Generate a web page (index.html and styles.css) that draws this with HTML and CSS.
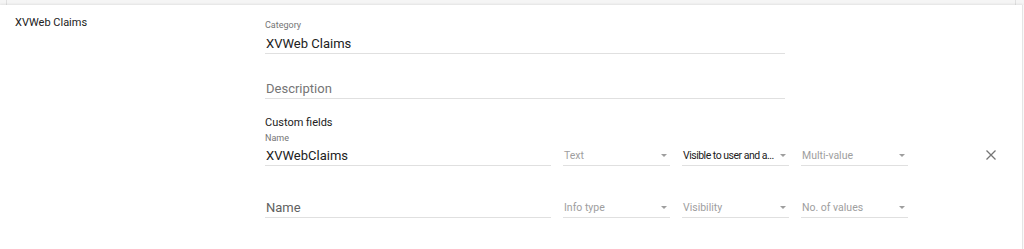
FILE: index.html
```html
<!DOCTYPE html>
<html lang="en">
<head>
<meta charset="utf-8">
<title>XVWeb Claims</title>
<link rel="stylesheet" href="styles.css">
</head>
<body>
<div class="page">
  <div class="prev"><div class="prev-inner"></div></div>
  <div class="card">
    <div class="card-title">XVWeb Claims</div>
    <div class="form">
      <div class="field wide">
        <div class="label">Category</div>
        <div class="input">XVWeb Claims</div>
      </div>
      <div class="field wide gap">
        <div class="label"></div>
        <div class="input placeholder">Description</div>
      </div>
      <div class="section-title">Custom fields</div>
      <div class="row">
        <div class="field name">
          <div class="label row-label">Name</div>
          <div class="input">XVWebClaims</div>
        </div>
        <div class="select"><span class="sel-text muted">Text</span><span class="arrow"></span></div>
        <div class="select"><span class="sel-text tight">Visible to user and a...</span><span class="arrow"></span></div>
        <div class="select"><span class="sel-text muted">Multi-value</span><span class="arrow"></span></div>
        <button class="remove" aria-label="Remove">
          <svg width="12" height="12" viewBox="0 0 12 12"><path d="M1.5 1.5 L10.5 10.5 M10.5 1.5 L1.5 10.5" stroke="#757575" stroke-width="1.3" fill="none"/></svg>
        </button>
      </div>
      <div class="row row2">
        <div class="field name">
          <div class="label row-label"></div>
          <div class="input placeholder dark">Name</div>
        </div>
        <div class="select"><span class="sel-text muted">Info type</span><span class="arrow"></span></div>
        <div class="select"><span class="sel-text muted">Visibility</span><span class="arrow"></span></div>
        <div class="select"><span class="sel-text muted">No. of values</span><span class="arrow"></span></div>
      </div>
    </div>
  </div>
</div>
</body>
</html>
```
FILE: styles.css
```css
html, body {
  margin: 0;
  padding: 0;
  background: #fff;
  font-family: Roboto, "Liberation Sans", Arial, sans-serif;
  color: #212121;
}
.page {
  width: 1024px;
  height: 249px;
  overflow: hidden;
}
.prev {
  height: 5px;
  background: #f5f5f5;
}
.prev-inner {
  margin-left: 6px;
  width: 1008px;
  height: 5px;
  border-left: 1px solid #e0e0e0;
  border-right: 1px solid #e0e0e0;
}
.card {
  display: flex;
  height: 244px;
  padding: 10px 0 0 15px;
  box-sizing: border-box;
  width: 1023px;
  border-right: 1px solid #e4e4e4;
  box-shadow: 0 -1px 2px rgba(0, 0, 0, 0.08);
  background: #fff;
}
.card-title {
  width: 250px;
  flex: none;
  font-size: 11px;
  line-height: 14px;
  padding-top: 1px;
  font-weight: 400;
  color: #212121;
}
.form {
  padding-top: 5px;
  flex: 1;
}
.field {
  display: flex;
  flex-direction: column;
}
.wide {
  width: 520px;
}
.gap {
  margin-top: 11px;
}
.label {
  font-size: 9px;
  line-height: 11px;
  height: 11px;
  color: #757575;
  margin-bottom: 2px;
}
.row-label {
  margin-bottom: 1px;
}
.input {
  font-size: 13px;
  line-height: 20px;
  height: 19px;
  padding-top: 1px;
  border-bottom: 1px solid #e0e0e0;
  padding-left: 1px;
  color: #212121;
}
.placeholder {
  color: #757575;
}
.placeholder.dark {
  color: #616161;
}
.section-title {
  margin-top: 17px;
  font-size: 11px;
  line-height: 14px;
  color: #212121;
}
.row {
  display: flex;
  align-items: flex-end;
  gap: 12px;
  margin-top: 3px;
}
.row2 {
  margin-top: 19px;
}
.name {
  width: 286px;
}
.select {
  width: 107px;
  height: 19px;
  padding-top: 1px;
  border-bottom: 1px solid #e0e0e0;
  display: flex;
  align-items: center;
}
.sel-text {
  flex: 1;
  min-width: 0;
  font-size: 10.5px;
  line-height: 20px;
  white-space: nowrap;
  color: #212121;
  padding-left: 1px;
}
.sel-text.tight {
  letter-spacing: -0.5px;
}
.sel-text.muted {
  color: #9e9e9e;
}
.arrow {
  flex: none;
  width: 0;
  height: 0;
  border-left: 3.5px solid transparent;
  border-right: 3.5px solid transparent;
  border-top: 3.5px solid #9e9e9e;
  margin: 0 3px 0 4px;
}
.remove {
  margin-left: 61px;
  margin-bottom: 1px;
  width: 20px;
  height: 20px;
  padding: 0;
  border: none;
  background: transparent;
  display: flex;
  align-items: center;
  justify-content: center;
}
```
